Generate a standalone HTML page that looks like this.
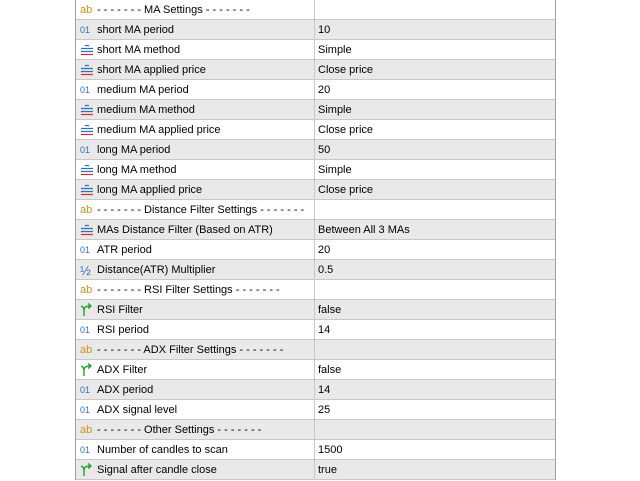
<!DOCTYPE html>
<html><head><style>
body{margin:0;width:640px;height:480px;background:#fff;overflow:hidden;font-family:"Liberation Sans",sans-serif;font-size:11px;color:#000}
.t{position:absolute;left:75px;top:0;width:479px;border-left:1px solid #a0a0a0;border-right:1px solid #a0a0a0}
.r{height:19px;border-bottom:1px solid #c8c8c8;position:relative;line-height:21px}
.r:nth-child(even){background:#e9e9e9}
.n{position:absolute;left:21px;white-space:nowrap}
.v{position:absolute;left:238px;top:0;bottom:-1px;border-left:1px solid #c8c8c8;padding-left:3px;width:236px}
.i{position:absolute;left:4px;top:0;width:14px;height:19px;font-size:11px}
svg.i{width:14px;height:19px}
.ab{color:#c8961e}
.o1{color:#2f6fb5;font-size:9px}
</style></head><body>
<div class="t">
<div class="r"><span class="i ab">ab</span><span class="n">- - - - - - - MA Settings - - - - - - -</span><span class="v"></span></div>
<div class="r"><span class="i o1">01</span><span class="n">short MA period</span><span class="v">10</span></div>
<div class="r"><svg class="i" viewBox="0 0 14 19"><path d="M5 5.5h4M1 8.5h12M1 11.5h12" stroke="#2f6fb5" stroke-width="1.2"/><path d="M1 14.5h12" stroke="#d03030" stroke-width="1.2"/></svg><span class="n">short MA method</span><span class="v">Simple</span></div>
<div class="r"><svg class="i" viewBox="0 0 14 19"><path d="M5 5.5h4M1 8.5h12M1 11.5h12" stroke="#2f6fb5" stroke-width="1.2"/><path d="M1 14.5h12" stroke="#d03030" stroke-width="1.2"/></svg><span class="n">short MA applied price</span><span class="v">Close price</span></div>
<div class="r"><span class="i o1">01</span><span class="n">medium MA period</span><span class="v">20</span></div>
<div class="r"><svg class="i" viewBox="0 0 14 19"><path d="M5 5.5h4M1 8.5h12M1 11.5h12" stroke="#2f6fb5" stroke-width="1.2"/><path d="M1 14.5h12" stroke="#d03030" stroke-width="1.2"/></svg><span class="n">medium MA method</span><span class="v">Simple</span></div>
<div class="r"><svg class="i" viewBox="0 0 14 19"><path d="M5 5.5h4M1 8.5h12M1 11.5h12" stroke="#2f6fb5" stroke-width="1.2"/><path d="M1 14.5h12" stroke="#d03030" stroke-width="1.2"/></svg><span class="n">medium MA applied price</span><span class="v">Close price</span></div>
<div class="r"><span class="i o1">01</span><span class="n">long MA period</span><span class="v">50</span></div>
<div class="r"><svg class="i" viewBox="0 0 14 19"><path d="M5 5.5h4M1 8.5h12M1 11.5h12" stroke="#2f6fb5" stroke-width="1.2"/><path d="M1 14.5h12" stroke="#d03030" stroke-width="1.2"/></svg><span class="n">long MA method</span><span class="v">Simple</span></div>
<div class="r"><svg class="i" viewBox="0 0 14 19"><path d="M5 5.5h4M1 8.5h12M1 11.5h12" stroke="#2f6fb5" stroke-width="1.2"/><path d="M1 14.5h12" stroke="#d03030" stroke-width="1.2"/></svg><span class="n">long MA applied price</span><span class="v">Close price</span></div>
<div class="r"><span class="i ab">ab</span><span class="n">- - - - - - - Distance Filter Settings - - - - - - -</span><span class="v"></span></div>
<div class="r"><svg class="i" viewBox="0 0 14 19"><path d="M5 5.5h4M1 8.5h12M1 11.5h12" stroke="#2f6fb5" stroke-width="1.2"/><path d="M1 14.5h12" stroke="#d03030" stroke-width="1.2"/></svg><span class="n">MAs Distance Filter (Based on ATR)</span><span class="v">Between All 3 MAs</span></div>
<div class="r"><span class="i o1">01</span><span class="n">ATR period</span><span class="v">20</span></div>
<div class="r"><span class="i" style="color:#2f6fb5;font-size:13px">½</span><span class="n">Distance(ATR) Multiplier</span><span class="v">0.5</span></div>
<div class="r"><span class="i ab">ab</span><span class="n">- - - - - - - RSI Filter Settings - - - - - - -</span><span class="v"></span></div>
<div class="r"><svg class="i" viewBox="0 0 14 19"><path d="M4 16V10Q4 6 10 6M8 3.5l3 2.5-3 2.5M4 11Q4 7 1 6" stroke="#1a9a2a" stroke-width="1.3" fill="none"/></svg><span class="n">RSI Filter</span><span class="v">false</span></div>
<div class="r"><span class="i o1">01</span><span class="n">RSI period</span><span class="v">14</span></div>
<div class="r"><span class="i ab">ab</span><span class="n">- - - - - - - ADX Filter Settings - - - - - - -</span><span class="v"></span></div>
<div class="r"><svg class="i" viewBox="0 0 14 19"><path d="M4 16V10Q4 6 10 6M8 3.5l3 2.5-3 2.5M4 11Q4 7 1 6" stroke="#1a9a2a" stroke-width="1.3" fill="none"/></svg><span class="n">ADX Filter</span><span class="v">false</span></div>
<div class="r"><span class="i o1">01</span><span class="n">ADX period</span><span class="v">14</span></div>
<div class="r"><span class="i o1">01</span><span class="n">ADX signal level</span><span class="v">25</span></div>
<div class="r"><span class="i ab">ab</span><span class="n">- - - - - - - Other Settings - - - - - - -</span><span class="v"></span></div>
<div class="r"><span class="i o1">01</span><span class="n">Number of candles to scan</span><span class="v">1500</span></div>
<div class="r"><svg class="i" viewBox="0 0 14 19"><path d="M4 16V10Q4 6 10 6M8 3.5l3 2.5-3 2.5M4 11Q4 7 1 6" stroke="#1a9a2a" stroke-width="1.3" fill="none"/></svg><span class="n">Signal after candle close</span><span class="v">true</span></div>
</div>
</body></html>
